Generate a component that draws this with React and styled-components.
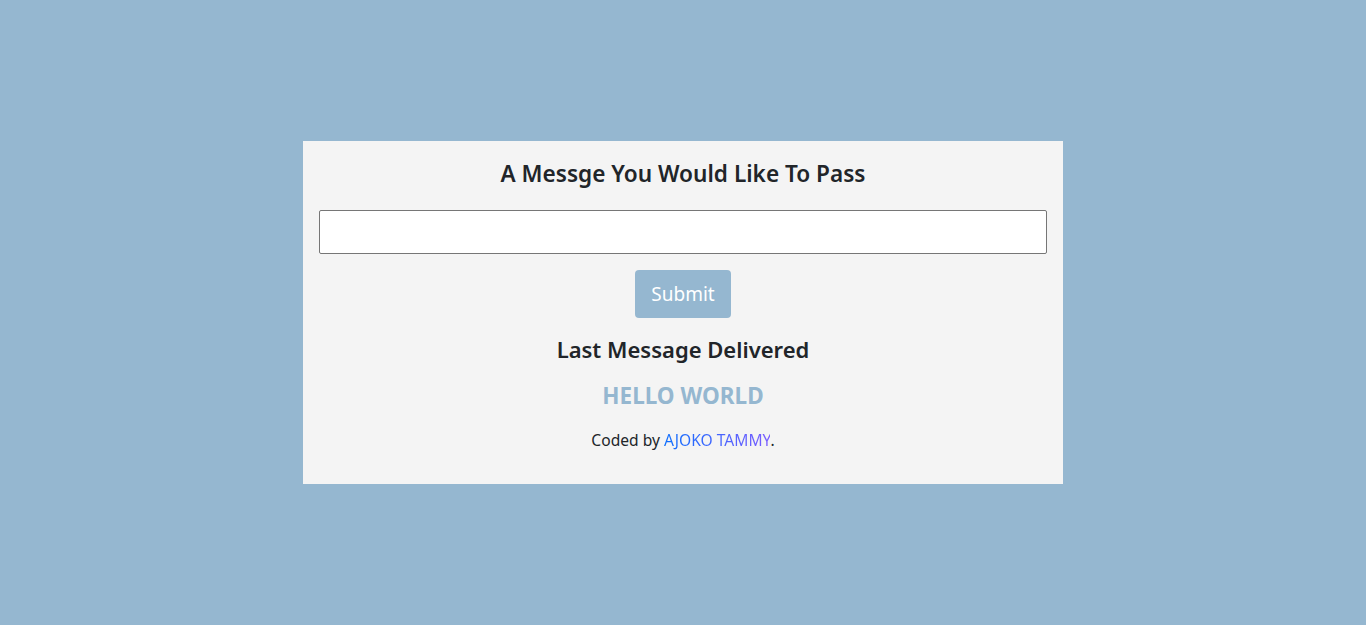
import React, { useState } from 'react'
import styled, { createGlobalStyle } from 'styled-components'

const GlobalStyle = createGlobalStyle`
    * {
        box-sizing: border-box;
    }
    body {
        margin: 0;
        background: #95b7d0;
        font-family: "Noto Sans", "Open Sans", sans-serif;
        color: #212529;
    }
`

const App = () => {
    const [message, setMessage] = useState('')
    const [lastMessage, setLastMessage] = useState('HELLO WORLD')

    const handleSubmit = (e) => {
        e.preventDefault()
        if (message.trim()) {
            setLastMessage(message.toUpperCase())
            setMessage('')
        }
    }

    return (
        <>
            <GlobalStyle />
            <Page>
                <Card onSubmit={handleSubmit}>
                    <Heading $size="22.6px">A Messge You Would Like To Pass</Heading>
                    <Input type="text" value={message} onChange={(e) => setMessage(e.target.value)} />
                    <SubmitButton type="submit">Submit</SubmitButton>
                    <Heading as="h3">Last Message Delivered</Heading>
                    <Message>{lastMessage}</Message>
                    <Credit>
                        Coded by <a href="#">AJOKO TAMMY</a>.
                    </Credit>
                </Card>
            </Page>
        </>
    )
}

export default App

const Page = styled.div`
    min-height: 100vh;
    display: flex;
    justify-content: center;
    align-items: center;
`

const Card = styled.form`
    width: 760px;
    height: 343px;
    background: #f4f4f4;
    padding: 17px 16px 16px;
    display: flex;
    flex-direction: column;
    align-items: center;
`

const Heading = styled.h2`
    margin: 0;
    font-size: ${props => props.$size || '22px'};
    font-weight: 600;
    line-height: 32px;
`

const Input = styled.input`
    margin-top: 20px;
    width: 100%;
    height: 44px;
    border: 1px solid #767676;
    border-radius: 2px;
    background: #fff;
    padding: 0 10px;
    font-size: 18px;
    font-family: inherit;
`

const SubmitButton = styled.button`
    margin-top: 16px;
    width: 96px;
    height: 48px;
    border: none;
    border-radius: 4px;
    background: #95b7d0;
    color: #fff;
    font-family: inherit;
    font-size: 19px;
    cursor: pointer;
    margin-bottom: 15px;
`

const Message = styled.h3`
    margin: 15px 0 0;
    font-size: 22.5px;
    font-weight: 700;
    line-height: 32px;
    color: #95b7d0;
`

const Credit = styled.p`
    margin: 17px 0 0;
    font-size: 15.6px;
    line-height: 22px;

    a {
        text-decoration: none;
        background: linear-gradient(to right, #0d6efd, #7a5cff);
        -webkit-background-clip: text;
        background-clip: text;
        color: transparent;
    }
`
